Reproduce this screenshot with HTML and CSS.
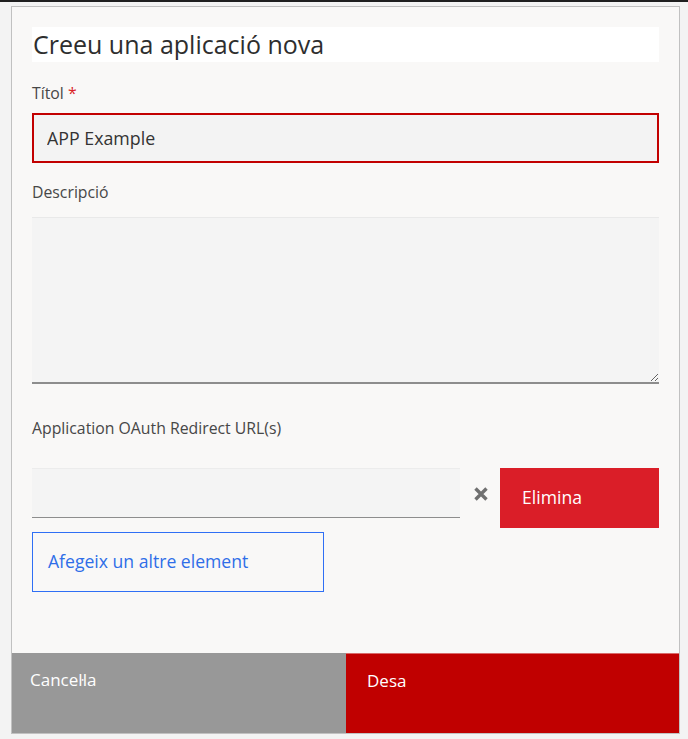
FILE: index.html
```html
<!DOCTYPE html>
<html lang="ca">
<head>
<meta charset="utf-8">
<title>Creeu una aplicació nova</title>
<link rel="stylesheet" href="styles.css">
</head>
<body>
<div class="topline"></div>
<div class="dialog">
  <div class="content">
    <h1 class="title">Creeu una aplicació nova</h1>
    <label class="label label-title">Títol <span class="req">*</span></label>
    <input class="text-input invalid" type="text" value="APP Example">
    <label class="label label-desc">Descripció</label>
    <textarea class="textarea"></textarea>
    <label class="label label-url">Application OAuth Redirect URL(s)</label>
    <div class="url-row">
      <input class="url-input" type="text" value="">
      <span class="clear-icon">
        <svg width="16" height="16" viewBox="0 0 16 16"><path d="M2.5 2.5 L13.5 13.5 M13.5 2.5 L2.5 13.5" stroke="#707070" stroke-width="3.4" stroke-linecap="butt" fill="none"/></svg>
      </span>
      <button class="btn-remove">Elimina</button>
    </div>
    <button class="btn-add">Afegeix un altre element</button>
  </div>
  <div class="footer">
    <button class="btn-cancel">Cancel·la</button>
    <button class="btn-save">Desa</button>
  </div>
</div>
</body>
</html>
```
FILE: styles.css
```css
html, body {
  margin: 0;
  padding: 0;
}
body {
  background: #f3f3f3;
  font-family: "Open Sans", "Noto Sans", sans-serif;
  color: #3b3b3b;
  width: 688px;
  height: 739px;
  overflow: hidden;
}
.topline {
  height: 2px;
  background: #1f1f1f;
}
.dialog {
  margin: 4px 0 0 11px;
  width: 667px;
  height: 726px;
  border: 1px solid #c1c1c1;
  background: #f9f8f7;
  display: flex;
  flex-direction: column;
  box-sizing: content-box;
}
.content {
  flex: 1;
  padding: 20px 20px 0 20px;
  display: flex;
  flex-direction: column;
  align-items: flex-start;
}
.title {
  margin: 0;
  width: 100%;
  height: 35px;
  line-height: 35px;
  background: #ffffff;
  font-size: 25px;
  font-weight: 400;
  color: #2e2e2e;
  padding-left: 1px;
  box-sizing: border-box;
}
.label {
  display: block;
  font-size: 15.8px;
  line-height: 20px;
  color: #474747;
}
.label-title { margin-top: 21px; }
.req { color: #da1e28; }
.text-input {
  margin-top: 10px;
  width: 100%;
  height: 50px;
  box-sizing: border-box;
  border: 2px solid #c20000;
  background: #f3f3f3;
  font-family: inherit;
  font-size: 17.8px;
  color: #333;
  padding: 0 13px;
  outline: none;
}
.label-desc { margin-top: 19px; }
.textarea {
  margin-top: 15px;
  width: 100%;
  height: 167px;
  box-sizing: border-box;
  border: none;
  border-top: 1px solid #e9e9e9;
  border-bottom: 2px solid #8d8d8d;
  background: #f4f4f4;
  font-family: inherit;
  outline: none;
  display: block;
}
.label-url { margin-top: 34px; }
.url-row {
  margin-top: 30px;
  width: 100%;
  display: flex;
  align-items: flex-start;
}
.url-input {
  width: 428px;
  height: 50px;
  box-sizing: border-box;
  border: none;
  border-top: 1px solid #ececec;
  border-bottom: 1px solid #8d8d8d;
  background: #f4f4f4;
  outline: none;
  font-family: inherit;
  font-size: 16px;
  padding: 0 14px;
}
.clear-icon {
  width: 40px;
  height: 50px;
  display: flex;
  align-items: center;
  justify-content: center;
}
.clear-icon svg { display: block; margin-left: 1px; margin-top: 1px; }
.btn-remove {
  width: 159px;
  height: 60px;
  border: none;
  background: #da1e28;
  color: #ffffff;
  font-family: inherit;
  font-size: 17.6px;
  text-align: left;
  padding: 0 0 2px 22px;
}
.btn-add {
  margin-top: 4px;
  width: 292px;
  height: 60px;
  box-sizing: border-box;
  border: 1px solid #2f6ff5;
  background: transparent;
  color: #2f6ee8;
  font-family: inherit;
  font-size: 17.6px;
  text-align: left;
  padding: 0 0 2px 15px;
}
.footer {
  height: 80px;
  display: flex;
}
.btn-cancel, .btn-save {
  border: none;
  color: #ffffff;
  font-family: inherit;
  font-size: 17px;
  text-align: left;
  display: flex;
  align-items: flex-start;
  box-sizing: border-box;
}
.btn-cancel {
  width: 334px;
  flex: none;
  background: #989898;
  padding: 15px 0 0 18px;
}
.btn-save {
  flex: 1;
  background: #c00000;
  padding: 15px 0 0 21px;
  border-top: 1px solid #d86a6a;
}
```
